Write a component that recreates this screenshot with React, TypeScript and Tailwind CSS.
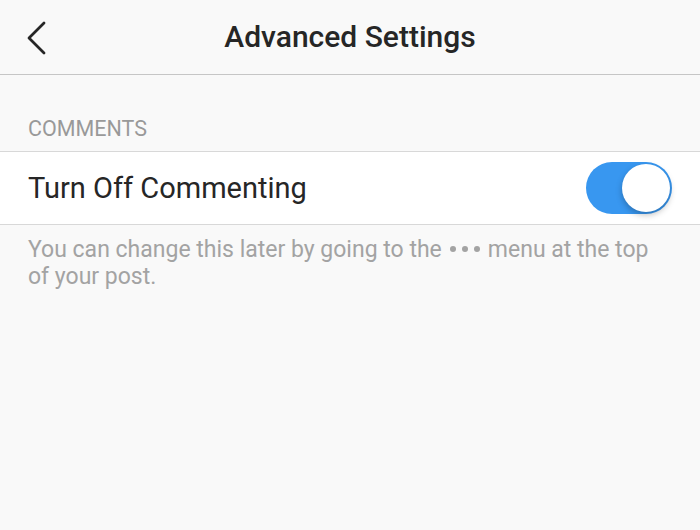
export default function App() {
  return (
    <div className="w-[700px] h-[530px] bg-[#f9f9f9] overflow-hidden" style={{ fontFamily: "Roboto, 'Noto Sans', sans-serif" }}>
      <div className="h-[75px] border-b border-[#c6c6c6] flex items-center relative">
        <div className="absolute left-[21px] top-[20px]">
          <svg width="28" height="36" viewBox="0 0 28 36" fill="none">
            <path d="M23 3 L8 18 L23 33" stroke="#262626" strokeWidth="2.8" strokeLinecap="round" strokeLinejoin="round" />
          </svg>
        </div>
        <div className="flex-1 text-center text-[30px] font-medium text-[#262626] leading-[36px] pb-[1px]">Advanced Settings</div>
      </div>
      <div className="pt-[41px] pb-[9px] px-[28px] text-[21.5px] leading-[26px] text-[#999999]">COMMENTS</div>
      <div className="h-[74px] bg-white border-y border-[#d8d8d8] flex items-center justify-between pl-[28px] pr-[28px]">
        <div className="text-[29px] text-[#262626] leading-[34px] pb-[1px]">Turn Off Commenting</div>
        <div className="w-[86px] h-[52px] rounded-full bg-[#3897f0] relative">
          <div className="absolute right-[2px] top-[2px] w-[48px] h-[48px] rounded-full bg-white shadow-[0_3px_6px_rgba(0,0,0,0.25)]" />
        </div>
      </div>
      <p className="px-[28px] pt-[11px] text-[23px] leading-[27px] text-[#a3a3a3]">
        <span>You can change this later by going to the</span>
        <span className="inline-flex gap-[6px] align-middle mb-[3px] ml-[8px] mr-[8px]">
          <span className="w-[6px] h-[6px] rounded-full bg-[#a3a3a3]" />
          <span className="w-[6px] h-[6px] rounded-full bg-[#a3a3a3]" />
          <span className="w-[6px] h-[6px] rounded-full bg-[#a3a3a3]" />
        </span>
        <span>menu at the top of your post.</span>
      </p>
    </div>
  );
}
